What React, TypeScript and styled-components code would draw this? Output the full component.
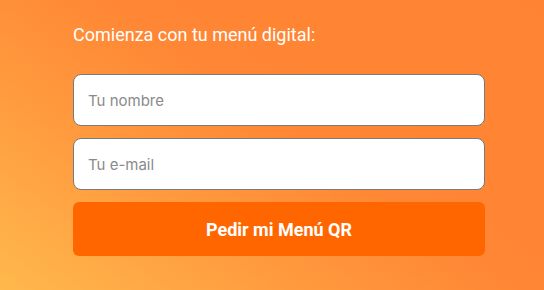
import React from "react";
import styled, { createGlobalStyle } from "styled-components";

const Global = createGlobalStyle`
  html, body { margin: 0; padding: 0; }
  body { width: 544px; height: 290px; overflow: hidden; }
  * { box-sizing: border-box; }
`;

const Page = styled.div`
  width: 544px;
  height: 290px;
  background: linear-gradient(35deg, #ffb84c 0%, #ff9b3f 30%, #ff8634 55%, #ff8332 100%);
  padding: 23px 59px 0 73px;
  font-family: Roboto, "Liberation Sans", sans-serif;
`;

const Title = styled.h2`
  margin: 0 0 28px 0;
  color: #ffffff;
  font-size: 18px;
  font-weight: 400;
  line-height: 23px;
`;

const Form = styled.form`
  display: flex;
  flex-direction: column;
  gap: 12px;
  width: 412px;
`;

const Input = styled.input`
  height: 52px;
  width: 100%;
  border: 1px solid #777b80;
  border-radius: 8px;
  background: #ffffff;
  padding: 0 14px;
  font-family: Inter, "Open Sans", sans-serif;
  font-size: 15px;
  color: #333;
  outline: none;
  &::placeholder { color: #8a8a8a; }
`;

const Button = styled.button`
  height: 54px;
  width: 100%;
  border: none;
  border-radius: 6px;
  background: #ff6600;
  color: #ffffff;
  font-family: Roboto, "Liberation Sans", sans-serif;
  font-size: 18px;
  font-weight: 700;
  cursor: pointer;
`;

export default function App() {
  return (
    <>
      <Global />
      <Page>
        <Title>Comienza con tu menú digital:</Title>
        <Form onSubmit={(e) => e.preventDefault()}>
          <Input placeholder="Tu nombre" />
          <Input placeholder="Tu e-mail" />
          <Button type="submit">Pedir mi Menú QR</Button>
        </Form>
      </Page>
    </>
  );
}
